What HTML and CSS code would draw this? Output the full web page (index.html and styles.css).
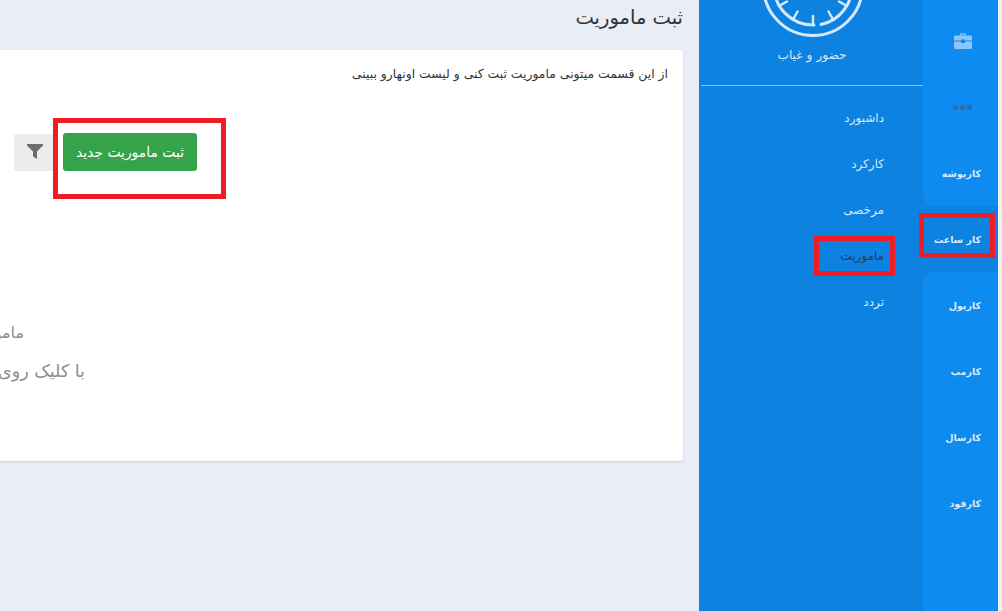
FILE: index.html
```html
<!DOCTYPE html>
<html lang="fa" dir="rtl">
<head>
    <meta charset="UTF-8">
    <meta name="viewport" content="width=device-width, initial-scale=1.0">
    <title>ثبت ماموریت</title>
    <link rel="stylesheet" href="styles.css">
</head>
<body>
    <!-- نوار باریک راست -->
    <nav class="apps">
        <a class="app" href="#">
            <svg class="app-icon" width="18" height="16" viewBox="0 0 18 16">
                <path d="M6 2.500V1.200C6 .6 6.500 .2 7 .2h4c.5 0 1 .4 1 1v1.300h-1.400V1.600H7.400v.9z" fill="#8cc6fa"/>
                <path d="M1.500 2.500h15c.8 0 1.500.7 1.500 1.500v3.600H11V6.500H7v1.100H0V4c0-.8.700-1.500 1.500-1.500z" fill="#8cc6fa"/>
                <path d="M0 8.600h7v1.400h4V8.600h7v5.900c0 .8-.7 1.500-1.500 1.500h-15C.7 16 0 15.300 0 14.500z" fill="#8cc6fa"/>
            </svg>
        </a>
        <a class="app" href="#">
            <span class="dots"><i></i><i></i><i></i></span>
        </a>
        <a class="app app-prev" href="#">کارپوشه</a>
        <a class="app app-active" href="#">کار ساعت</a>
        <a class="app app-next" href="#">کارپول</a>
        <a class="app" href="#">کارمپ</a>
        <a class="app" href="#">کارسال</a>
        <a class="app" href="#">کارفود</a>
        <div class="apps-fill"></div>
    </nav>

    <!-- منوی کارساعت -->
    <aside class="panel">
        <svg class="clock" width="104" height="104" viewBox="0 0 104 104" fill="none" stroke="#d5e9fa" stroke-linecap="round">
            <circle cx="52" cy="52" r="49.500" stroke-width="3"/>
            <path d="M60 90.500A39 39 0 0 0 91 52M13 52A39 39 0 0 0 53 91" stroke-width="3"/>
            <path d="M52 91v-9M32 85.500l4.500-8M72 85.500l-4.500-8M18 72l8-4.500M86 72l-8-4.500" stroke-width="2.500"/>
        </svg>
        <div class="panel-title">حضور و غیاب</div>
        <ul class="menu">
            <li><a href="#">داشبورد</a></li>
            <li><a href="#">کارکرد</a></li>
            <li><a href="#">مرخصی</a></li>
            <li><a class="menu-active" href="#">ماموریت</a></li>
            <li><a href="#">تردد</a></li>
        </ul>
    </aside>

    <!-- محتوای صفحه -->
    <main class="content">
        <h1 class="page-title">ثبت ماموریت</h1>
        <section class="card">
            <p class="intro">از این قسمت میتونی ماموریت ثبت کنی و لیست اونهارو ببینی</p>
            <div class="actions">
                <button class="btn-new">ثبت ماموریت جدید</button>
                <button class="btn-filter">
                    <svg width="16" height="15" viewBox="0 0 16 15"><path d="M0 0h16v1.500L10 7.500V15l-4-2.500V7.500L0 1.500z" fill="#6d6d6d"/></svg>
                </button>
            </div>
            <p class="empty-title">ماموریتی ثبت نشده است</p>
            <p class="empty-hint">با کلیک روی دکمه ثبت ماموریت جدید</p>
        </section>
    </main>

    <!-- کادرهای قرمز -->
    <div class="mark mark-button"></div>
    <div class="mark mark-menu"></div>
    <div class="mark mark-app"></div>
</body>
</html>
```

FILE: styles.css
```css
body {
    font-family: "DejaVu Sans", sans-serif;
    background: #f1f1f1;
    margin: 0;
    padding: 0 4px 0 0;
    height: 611px;
    display: flex;
    overflow: hidden;
    position: relative;
}

/* نوار باریک */
.apps {
    width: 75px;
    flex-shrink: 0;
    display: flex;
    flex-direction: column;
    background: #0e82e0;
    padding-top: 8px;
    box-sizing: border-box;
}

.apps::before {
    content: "";
    height: 8px;
    margin-top: -8px;
    background: #0e8bf0;
}

.app {
    height: 66px;
    flex-shrink: 0;
    display: flex;
    align-items: center;
    padding-right: 17px;
    background: #0e8bf0;
    color: #d5e9fb;
    font-size: 9.500px;
    font-weight: bold;
    text-decoration: none;
}

.app-icon {
    margin-right: 9px;
}

.app-prev {
    border-bottom-left-radius: 12px;
}

.app-next {
    border-top-left-radius: 12px;
}

.app-active {
    background: #0e82e0;
}

.apps-fill {
    flex: 1;
    background: #0e8bf0;
}

.dots {
    display: flex;
    gap: 2px;
    margin-right: 9px;
}

.dots i {
    width: 5px;
    height: 5px;
    border-radius: 50%;
    background: #2f6ca3;
}

/* منو */
.panel {
    width: 224px;
    flex-shrink: 0;
    background: #0e82e0;
    color: #d5e9fb;
}

.clock {
    display: block;
    margin: -66px 58px 0 0;
}

.panel-title {
    text-align: center;
    font-size: 12.200px;
    line-height: 20px;
    margin: 7px 0 0 2px;
    padding-bottom: 20px;
    border-bottom: 1px solid #8cc6f5;
}

.menu {
    list-style: none;
    margin: 9px 0 0;
    padding: 0 39px 0 0;
}

.menu li {
    height: 46px;
    display: flex;
    align-items: center;
}

.menu a {
    color: #d5e9fb;
    font-size: 12px;
    text-decoration: none;
}

.menu .menu-active {
    color: #2b3f50;
}

/* محتوا */
.content {
    width: 699px;
    flex-shrink: 0;
    background: #e9edf6;
    overflow: hidden;
    padding-right: 16px;
    box-sizing: border-box;
}

.page-title {
    font-size: 19.500px;
    font-weight: normal;
    color: #333;
    line-height: 36px;
    height: 50px;
    margin: 0;
}

.card {
    width: 900px;
    height: 411px;
    background: #fff;
    border-radius: 4px;
    box-shadow: 0 1px 3px rgba(0, 0, 0, 0.12);
    padding: 15px;
    box-sizing: border-box;
}

.intro {
    margin: 0;
    font-size: 12.400px;
    line-height: 17px;
    color: #333;
}

.actions {
    display: flex;
    gap: 8px;
    margin: 51px 471px 0 0;
}

.btn-new {
    width: 134px;
    height: 38px;
    padding: 0;
    border: none;
    border-radius: 3px;
    background: #34a34a;
    color: #fff;
    font-family: inherit;
    font-size: 13.900px;
}

.btn-filter {
    width: 41px;
    height: 37px;
    margin-top: 1px;
    padding: 0;
    border: none;
    border-radius: 3px 0 0 3px;
    background: #ececec;
}

.empty-title,
.empty-hint {
    color: #8f8f8f;
    white-space: nowrap;
    margin: 0;
}

.empty-title {
    font-size: 16px;
    line-height: 24px;
    margin: 150px 644px 0 0;
}

.empty-hint {
    font-size: 17.500px;
    line-height: 26px;
    margin: 13px 583px 0 0;
}

/* کادرهای قرمز روی تصویر */
.mark {
    position: absolute;
    border: 5px solid #ee1c25;
    box-sizing: border-box;
}

.mark-button {
    left: 53px;
    top: 118px;
    width: 173px;
    height: 81px;
}

.mark-menu {
    left: 814px;
    top: 236px;
    width: 81px;
    height: 40px;
}

.mark-app {
    left: 919px;
    top: 213px;
    width: 76px;
    height: 45px;
}
```
